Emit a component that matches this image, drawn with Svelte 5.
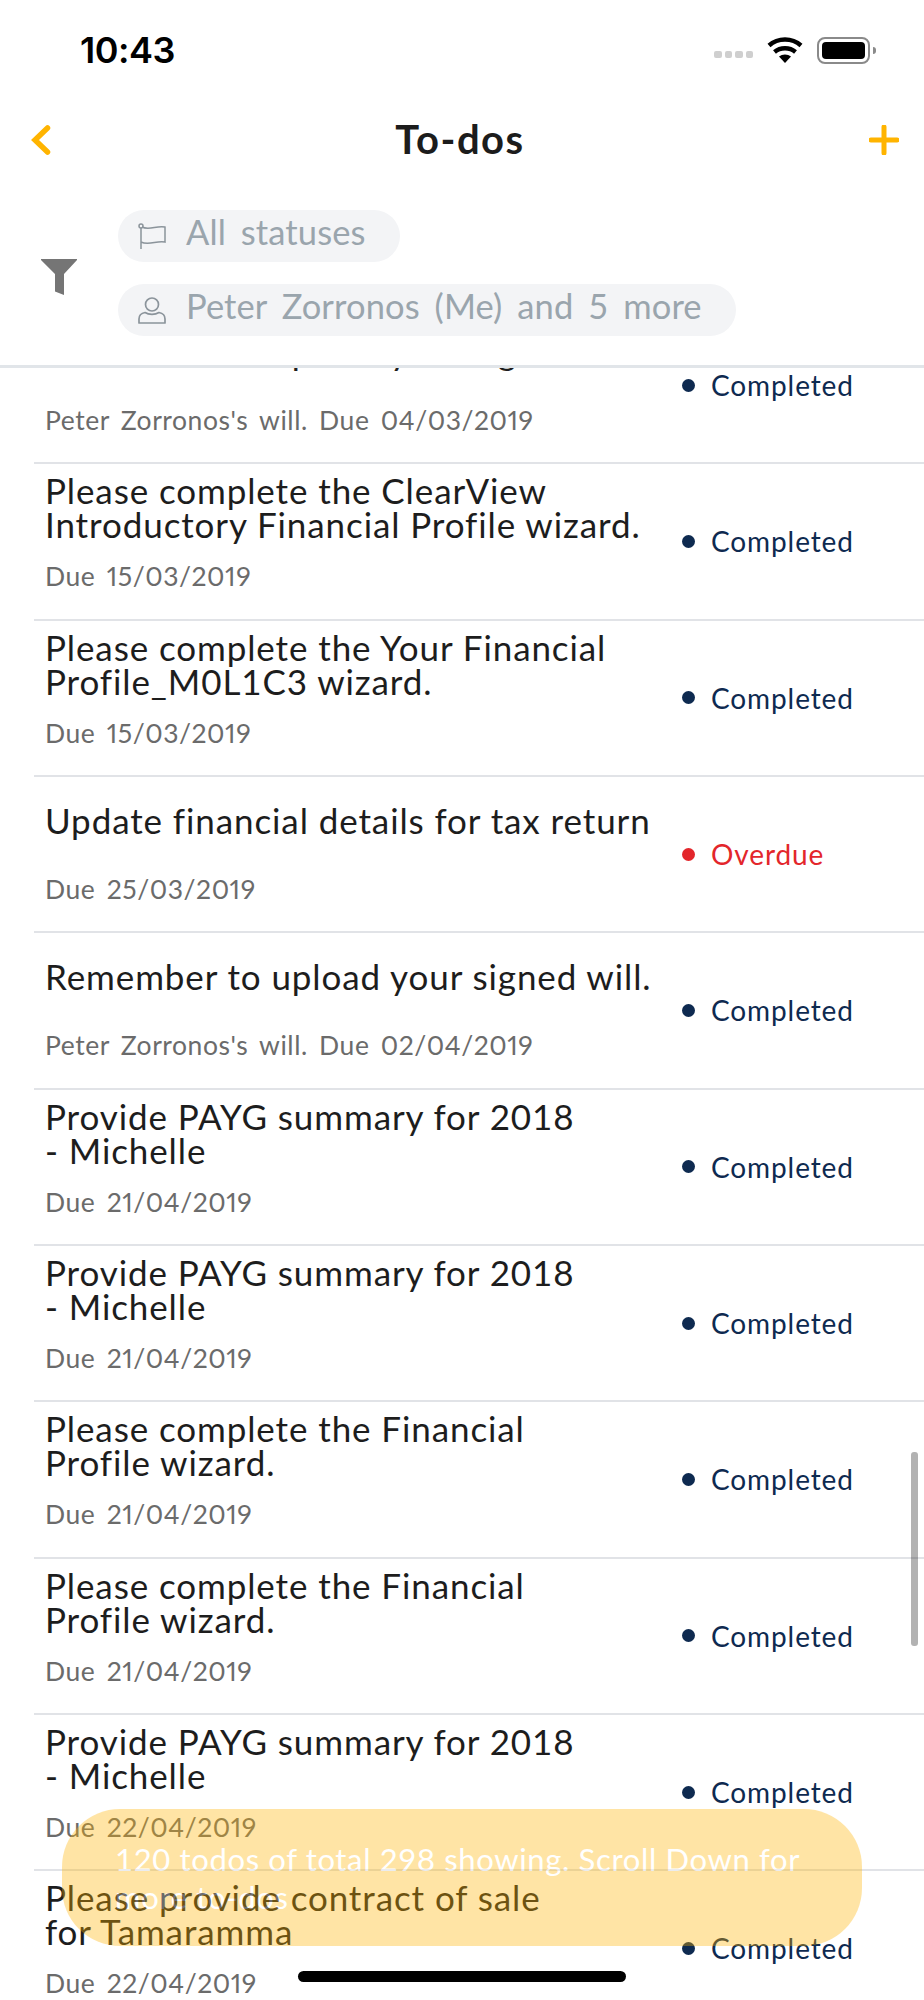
<script>
    const todos = [
        { title: "Remember to upload your signed will.", due: "Peter Zorronos's will. Due 04/03/2019", status: "Completed" },
        { title: "Please complete the ClearView\nIntroductory Financial Profile wizard.", due: "Due 15/03/2019", status: "Completed" },
        { title: "Please complete the Your Financial\nProfile_M0L1C3 wizard.", due: "Due 15/03/2019", status: "Completed" },
        { title: "Update financial details for tax return", due: "Due 25/03/2019", status: "Overdue" },
        { title: "Remember to upload your signed will.", due: "Peter Zorronos's will. Due 02/04/2019", status: "Completed" },
        { title: "Provide PAYG summary for 2018\n- Michelle", due: "Due 21/04/2019", status: "Completed" },
        { title: "Provide PAYG summary for 2018\n- Michelle", due: "Due 21/04/2019", status: "Completed" },
        { title: "Please complete the Financial\nProfile wizard.", due: "Due 21/04/2019", status: "Completed" },
        { title: "Please complete the Financial\nProfile wizard.", due: "Due 21/04/2019", status: "Completed" },
        { title: "Provide PAYG summary for 2018\n- Michelle", due: "Due 22/04/2019", status: "Completed" },
        { title: "Please provide contract of sale\nfor Tamaramma", due: "Due 22/04/2019", status: "Completed" },
    ];
</script>

<main>
    <header>
        <div class="statusbar">
            <span class="time">10:43</span>
            <div class="indicators">
                <div class="signal"><i></i><i></i><i></i><i></i></div>
                <svg class="wifi" viewBox="0 0 36 26" width="36" height="26">
                    <path d="M18 26l-6-6.5c3.4-2.8 8.6-2.8 12 0z" fill="#000" />
                    <path d="M7.5 15c5.8-5 15.2-5 21 0" fill="none" stroke="#000" stroke-width="4.4" />
                    <path d="M2 8.5c9-8 23-8 32 0" fill="none" stroke="#000" stroke-width="4.4" />
                </svg>
                <div class="battery"><div class="charge"></div></div>
                <div class="cap"></div>
            </div>
        </div>
        <nav>
            <svg class="back" viewBox="0 0 20 30" width="20" height="30">
                <path d="M16.5 3L4 15l12.500 12" fill="none" stroke="#ffb400" stroke-width="5.500" stroke-linecap="round" />
            </svg>
            <h1>To-dos</h1>
            <svg class="add" viewBox="0 0 30 30" width="30" height="30">
                <path d="M15 2v26M2 15h26" fill="none" stroke="#ffb400" stroke-width="5" stroke-linecap="round" />
            </svg>
        </nav>
        <div class="filters">
            <svg class="funnel" viewBox="0 0 36 36" width="36" height="36">
                <path d="M0 0h36v1L23 15v21l-9-3.500V15L0 1z" fill="#757575" />
            </svg>
            <div class="chips">
                <div class="chip">
                    <svg viewBox="0 0 28 27" width="28" height="27">
                        <circle cx="3" cy="3" r="2" fill="none" stroke="#8b949b" stroke-width="1.500" />
                        <path d="M3 5v21M4 4c7 4 15-2 23 0v15c-8-2-16 4-24 0" fill="none" stroke="#8b949b" stroke-width="1.500" />
                    </svg>
                    <span>All statuses</span>
                </div>
                <div class="chip">
                    <svg viewBox="0 0 28 27" width="28" height="27">
                        <circle cx="14" cy="7.500" r="6.500" fill="none" stroke="#8b949b" stroke-width="1.700" />
                        <path d="M1 26v-4c0-4 3-6 6-6.500 4 2.500 10 2.500 14 0 3 .5 6 2.500 6 6.500v4z" fill="none" stroke="#8b949b" stroke-width="1.700" stroke-linejoin="round" />
                    </svg>
                    <span>Peter Zorronos (Me) and 5 more</span>
                </div>
            </div>
        </div>
    </header>

    <div class="list">
        <div class="rows">
            {#each todos as todo}
                <div class="row">
                    <div class="body">
                        <div class="title">{todo.title}</div>
                        <div class="due">{todo.due}</div>
                    </div>
                    <div class="status" class:overdue={todo.status === "Overdue"}>
                        <span class="dot"></span>{todo.status}
                    </div>
                </div>
            {/each}
        </div>
    </div>

    <div class="scrollbar"></div>
    <div class="toast"><p>120 todos of total 298 showing. Scroll Down for more to-dos</p></div>
    <div class="home"></div>
</main>

<style>
    :global(body) {
        margin: 0;
        background: #fff;
    }
    main {
        position: relative;
        width: 924px;
        height: 2000px;
        overflow: hidden;
        font-family: Lato, "Noto Sans", sans-serif;
    }
    header {
        height: 365px;
        border-bottom: 3px solid #e1e5e9;
        box-sizing: content-box;
        display: flex;
        flex-direction: column;
    }
    .statusbar {
        height: 100px;
        display: flex;
        align-items: center;
        justify-content: space-between;
        padding: 0 48px 0 80px;
    }
    .time {
        font-family: Inter, sans-serif;
        font-size: 36px;
        font-weight: 600;
        letter-spacing: -0.5px;
        color: #000;
    }
    .indicators {
        display: flex;
        align-items: center;
    }
    .signal {
        display: flex;
        gap: 3px;
        margin-top: 9px;
        margin-right: 14px;
    }
    .signal i {
        width: 7.5px;
        height: 7.500px;
        border-radius: 2px;
        background: #cfcfcf;
    }
    .battery {
        width: 53px;
        height: 27px;
        box-sizing: border-box;
        margin-left: 14px;
        border: 2px solid #8a8a8a;
        border-radius: 8px;
        padding: 3px;
    }
    .charge {
        height: 100%;
        background: #000;
        border-radius: 4px;
    }
    .cap {
        width: 3px;
        height: 7px;
        margin-left: 3px;
        background: #8a8a8a;
        border-radius: 0 3px 3px 0;
    }
    nav {
        height: 80px;
        display: flex;
        align-items: center;
        justify-content: space-between;
        padding: 0 25px 0 31px;
    }
    h1 {
        margin: 0 0 3px;
        font-size: 40px;
        font-weight: 700;
        letter-spacing: 1.500px;
        color: #1c1c1c;
    }
    .filters {
        display: flex;
        align-items: center;
        padding: 30px 0 0 41px;
        gap: 41px;
    }
    .funnel {
        margin-top: 8px;
    }
    .chips {
        display: flex;
        flex-direction: column;
        align-items: flex-start;
        gap: 22px;
    }
    .chip {
        height: 52px;
        display: flex;
        align-items: center;
        gap: 20px;
        padding: 0 34px 0 20px;
        background: #f3f4f6;
        border-radius: 26px;
        color: #9aa5ad;
        font-size: 34.500px;
        letter-spacing: 0.1px;
        word-spacing: 6px;
    }
    .chip span {
        margin-top: -9px;
    }
    .list {
        height: 1632px;
        overflow: hidden;
    }
    .rows {
        margin-top: -60px;
    }
    .row {
        height: 156.33px;
        box-sizing: border-box;
        margin-left: 34px;
        padding-left: 11px;
        border-bottom: 2.500px solid #e1e3e7;
        display: flex;
        justify-content: space-between;
    }
    .title {
        height: 86px;
        display: flex;
        align-items: center;
        white-space: pre-line;
        font-size: 35px;
        line-height: 34px;
        letter-spacing: 0.9px;
        color: #1d1d1d;
    }
    .due {
        margin-top: 10px;
        font-size: 26.500px;
        line-height: 32px;
        letter-spacing: 0.55px;
        word-spacing: 4px;
        font-variant-numeric: proportional-nums;
        color: #6b6b6b;
    }
    .status {
        width: 242px;
        box-sizing: border-box;
        display: flex;
        align-items: center;
        font-size: 28px;
        letter-spacing: 0.9px;
        color: #0e2a50;
    }
    .status.overdue {
        color: #e3262b;
    }
    .dot {
        width: 13px;
        height: 13px;
        border-radius: 50%;
        background: currentColor;
        margin-right: 16px;
    }
    .scrollbar {
        position: absolute;
        left: 911px;
        top: 1452px;
        width: 6.500px;
        height: 194px;
        border-radius: 3px;
        background: rgba(0, 0, 0, 0.3);
    }
    .toast {
        position: absolute;
        left: 62px;
        top: 1809px;
        width: 800px;
        height: 137px;
        box-sizing: border-box;
        padding: 31px 50px 0 53px;
        border-radius: 58px;
        background: #ffb400;
        opacity: 0.35;
    }
    .toast p {
        margin: 0;
        font-size: 31px;
        line-height: 38px;
        letter-spacing: 0.65px;
        color: #fff;
    }
    .home {
        position: absolute;
        left: 298px;
        top: 1971px;
        width: 328px;
        height: 11px;
        border-radius: 6px;
        background: #000;
    }
</style>
